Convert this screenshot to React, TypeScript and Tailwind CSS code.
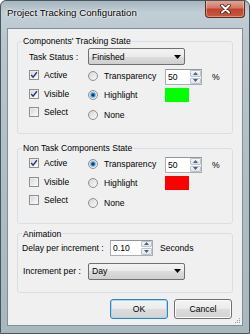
import React from "react";

function Check({ checked }: { checked: boolean }) {
  return (
    <svg width="10" height="10" viewBox="0 0 10 10" className="shrink-0">
      <defs>
        <linearGradient id="cbg" x1="0" y1="0" x2="1" y2="1">
          <stop offset="0" stopColor="#d8d8d8" />
          <stop offset="1" stopColor="#fafafa" />
        </linearGradient>
      </defs>
      <rect x="0.5" y="0.5" width="9" height="9" fill="#f4f4f4" stroke="#8e8f8f" />
      <rect x="1.5" y="1.5" width="7" height="7" fill="url(#cbg)" />
      {checked && (
        <path d="M2.2 5 L4.1 7.2 L7.9 2.3" fill="none" stroke="#23397a" strokeWidth="1.4" />
      )}
    </svg>
  );
}

function Radio({ checked }: { checked: boolean }) {
  return (
    <svg width="10" height="10" viewBox="0 0 10 10" className="shrink-0">
      <defs>
        <linearGradient id="rbg" x1="0" y1="0" x2="1" y2="1">
          <stop offset="0" stopColor="#d4d4d4" />
          <stop offset="1" stopColor="#fbfbfb" />
        </linearGradient>
      </defs>
      <circle cx="5" cy="5" r="4.5" fill="url(#rbg)" stroke="#8e8f8f" />
      {checked && (
        <>
          <circle cx="5" cy="5" r="2.7" fill="#2b86c9" stroke="#9cc9ea" strokeWidth="0.7" />
          <circle cx="5" cy="5" r="1.3" fill="#0f3a6b" />
        </>
      )}
    </svg>
  );
}

function Combo({ value, w }: { value: string; w: string }) {
  return (
    <div
      className={`flex h-[17px] ${w} items-center justify-between rounded-[2px] border border-[#707070] bg-[linear-gradient(#f3f3f3,#ebebeb_50%,#dddddd_50%,#cfcfcf)] pl-[3px] pr-[3px]`}
    >
      <span className="leading-[10px]">{value}</span>
      <svg width="7" height="4" viewBox="0 0 7 4">
        <path d="M0 0 H7 L3.5 4 Z" fill="#000" />
      </svg>
    </div>
  );
}

function Spin({ value, w }: { value: string; w: string }) {
  return (
    <div className={`flex h-[16px] ${w} border border-[#abadb3] border-t-[#8f96a0] bg-white`}>
      <span className="flex-1 pl-[2px] pt-[2px] leading-[10px]">{value}</span>
      <div className="flex w-[11px] flex-col gap-[1px] p-[0px]">
        <div className="flex flex-1 items-center justify-center rounded-[1px] border border-[#b9c4cf] bg-[linear-gradient(#f6f6f6,#e2e5ea)]">
          <svg width="5" height="3" viewBox="0 0 5 3">
            <path d="M0 3 H5 L2.5 0 Z" fill="#4c607a" />
          </svg>
        </div>
        <div className="flex flex-1 items-center justify-center rounded-[1px] border border-[#b9c4cf] bg-[linear-gradient(#f6f6f6,#e2e5ea)]">
          <svg width="5" height="3" viewBox="0 0 5 3">
            <path d="M0 0 H5 L2.5 3 Z" fill="#4c607a" />
          </svg>
        </div>
      </div>
    </div>
  );
}

function Group({
  title,
  className,
  children,
}: {
  title: string;
  className: string;
  children: React.ReactNode;
}) {
  return (
    <fieldset className={`mx-[9px] rounded-[3px] border border-[#d5dfe5] ${className}`}>
      <legend className="ml-[4px] px-[1px] leading-[10px]">{title}</legend>
      {children}
    </fieldset>
  );
}

function StateGrid({
  active,
  visible,
  select,
  radio,
  color,
}: {
  active: boolean;
  visible: boolean;
  select: boolean;
  radio: number;
  color: string;
}) {
  const checks: [string, boolean][] = [
    ["Active", active],
    ["Visible", visible],
    ["Select", select],
  ];
  const radios = ["Transparency", "Highlight", "None"];
  return (
    <div className="mt-[1px] grid grid-cols-[70px_77px_1fr]">
      <div className="flex flex-col pl-[11px]">
        {checks.map(([l, c]) => (
          <div key={l} className="flex h-[18.5px] items-center gap-[5px]">
            <Check checked={c} />
            <span className="leading-[10px]">{l}</span>
          </div>
        ))}
      </div>
      <div className="flex flex-col">
        {radios.map((l, i) => (
          <div key={l} className="flex h-[19.5px] items-center gap-[6px]">
            <Radio checked={radio === i} />
            <span className="leading-[10px]">{l}</span>
          </div>
        ))}
      </div>
      <div className="flex flex-col gap-[3px] pt-[3px]">
        <div className="flex items-center">
          <Spin value="50" w="w-[37px]" />
          <span className="ml-[10px] leading-[10px]">%</span>
        </div>
        <div className={`h-[14px] w-[24px] ${color}`} />
      </div>
    </div>
  );
}

export default function App() {
  return (
    <div className="relative flex h-[334px] w-[250px] flex-col overflow-hidden rounded-t-[6px] border border-[#48565f] bg-[linear-gradient(180deg,#a6b5bf_0px,#c2ced5_12px,#b9c6ce_40px,#aebcc4_200px,#a9b7bf_334px)] font-['Liberation_Sans',Arial,sans-serif] text-[8.6px] text-black">
      <div className="flex h-[27px] shrink-0 items-start">
        <div className="pl-[6px] pt-[6px] text-[9.7px] leading-[12px] [text-shadow:0_0_3px_#fff,0_0_2px_#fff]">
          Project Tracking Configuration
        </div>
        <div className="flex-1" />
        <div className="mr-[4px] mt-[-1px] flex h-[18px] w-[40px] items-center justify-center rounded-b-[4px] border border-t-0 border-[#5e2a22] bg-[linear-gradient(#e6a99c,#d27a67_45%,#c0432c_55%,#c85a3c)] shadow-[inset_0_0_0_1px_rgba(255,255,255,0.35)]">
          <svg width="11" height="10" viewBox="0 0 11 10">
            <path d="M2 1.5 L9 8.5 M9 1.5 L2 8.5" stroke="#4a1c16" strokeWidth="3.6" strokeLinecap="round" />
            <path d="M2 1.5 L9 8.5 M9 1.5 L2 8.5" stroke="#fff" strokeWidth="2" strokeLinecap="round" />
          </svg>
        </div>
      </div>

      <div className="relative mx-[6px] mb-[7px] flex flex-1 flex-col border border-[#7f909b] bg-[#f0f0f0]">
        <Group title="Components' Tracking State" className="mt-[7px] pb-[8.5px]">
          <div className="mt-[2px] flex h-[17px] items-center">
            <span className="w-[70px] pl-[11px] leading-[10px]">Task Status :</span>
            <Combo value="Finished" w="w-[97px]" />
          </div>
          <StateGrid active visible select={false} radio={1} color="bg-[#00ff00]" />
        </Group>

        <Group title="Non Task Components State" className="mt-[9px] pb-[10px]">
          <StateGrid active visible={false} select={false} radio={0} color="bg-[#ff0000]" />
        </Group>

        <Group title="Animation" className="mt-[5px] pb-[12px]">
          <div className="mt-[1px] flex items-center">
            <span className="w-[92px] pl-[4px] leading-[10px]">Delay per increment :</span>
            <Spin value="0.10" w="w-[43px]" />
            <span className="ml-[7px] leading-[10px]">Seconds</span>
          </div>
          <div className="mt-[7px] flex items-center">
            <span className="w-[70px] pl-[5px] leading-[10px]">Increment per :</span>
            <Combo value="Day" w="w-[97px]" />
          </div>
        </Group>

        <div className="mt-[6px] flex justify-end gap-[6px] pr-[10px]">
          <button className="h-[20px] w-[58px] rounded-[3px] border border-[#3c7fb1] bg-[linear-gradient(#f4f4f4,#ebebeb_50%,#dddddd_50%,#d3d3d3)] leading-[10px] shadow-[inset_0_0_0_1px_#9fdcf5]">
            OK
          </button>
          <button className="h-[20px] w-[58px] rounded-[3px] border border-[#707070] bg-[linear-gradient(#f4f4f4,#ebebeb_50%,#dddddd_50%,#d3d3d3)] leading-[10px] shadow-[inset_0_0_0_1px_#fbfbfb]">
            Cancel
          </button>
        </div>

        <svg width="7" height="7" viewBox="0 0 7 7" className="absolute bottom-[1px] right-[1px]">
          <rect x="5" y="1" width="1" height="1" fill="#a0a0a0" />
          <rect x="3" y="3" width="1" height="1" fill="#a0a0a0" />
          <rect x="5" y="3" width="1" height="1" fill="#a0a0a0" />
          <rect x="1" y="5" width="1" height="1" fill="#a0a0a0" />
          <rect x="3" y="5" width="1" height="1" fill="#a0a0a0" />
          <rect x="5" y="5" width="1" height="1" fill="#a0a0a0" />
        </svg>
      </div>
    </div>
  );
}
